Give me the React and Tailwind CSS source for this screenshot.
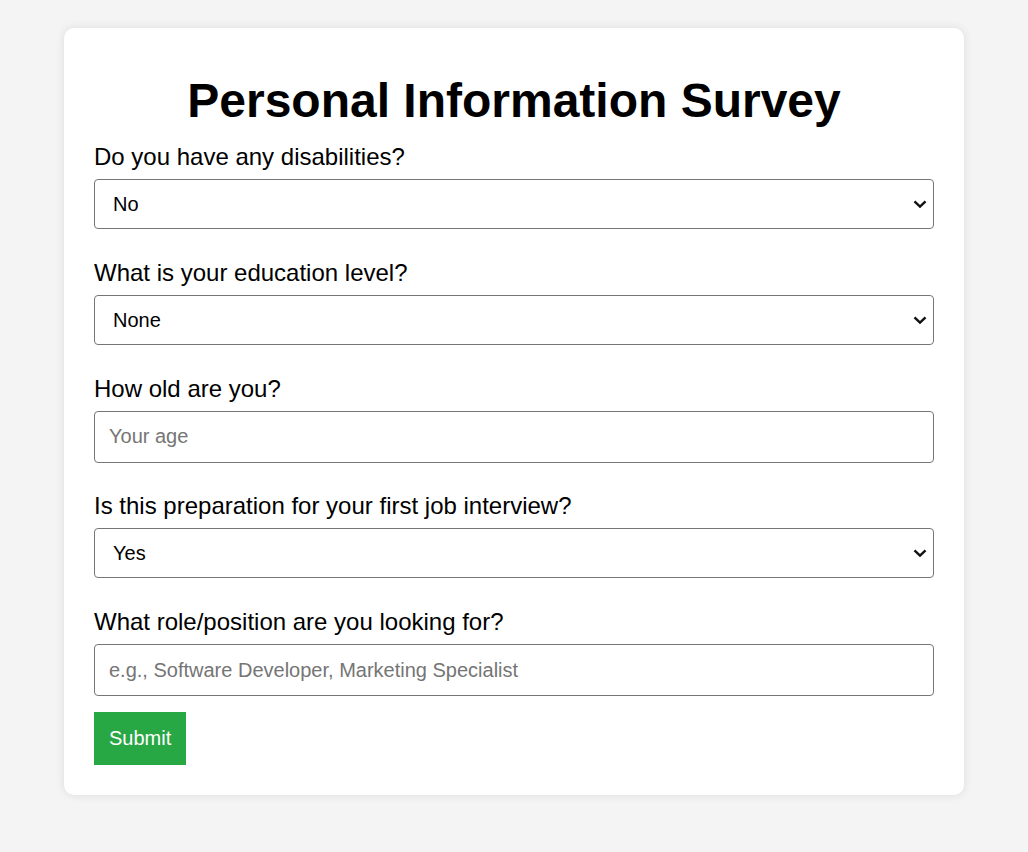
import React, { useState } from 'react';

const fieldClass =
  'w-full border border-[#767676] rounded-[4px] bg-white px-[14px] text-[20px] text-black outline-none';

const Field = ({ label, children, last }) => (
  <div className={last ? 'mb-[16px]' : 'mb-[29.75px]'}>
    <label className="block text-[24px] leading-[28px] mb-[8px]">{label}</label>
    {children}
  </div>
);

const Select = ({ value, onChange, options }) => (
  <div className="relative">
    <select
      className={`${fieldClass} h-[50px] appearance-none pl-[18px] pr-[36px]`}
      value={value}
      onChange={onChange}
    >
      {options.map((o) => (
        <option key={o}>{o}</option>
      ))}
    </select>
    <svg
      className="pointer-events-none absolute right-[7px] top-1/2 -translate-y-1/2"
      width="14"
      height="9"
      viewBox="0 0 14 9"
      fill="none"
    >
      <path d="M1.5 1.8 L7 7 L12.5 1.8" stroke="#111" strokeWidth="2.4" />
    </svg>
  </div>
);

export default function App() {
  const [form, setForm] = useState({
    disability: 'No',
    education: 'None',
    age: '',
    firstJob: 'Yes',
    role: '',
  });

  const set = (key) => (e) => setForm({ ...form, [key]: e.target.value });

  return (
    <div
      className="min-h-[852px] bg-[#f4f4f4] pt-[28px] text-black"
      style={{ fontFamily: '"Liberation Sans", Arial, sans-serif' }}
    >
      <div className="mx-auto w-[900px] bg-white rounded-[10px] shadow-[0_0_10px_rgba(0,0,0,0.1)] px-[30px] pt-[45px] pb-[30px]">
        <h1 className="text-center text-[48px] font-bold leading-[55px] mb-[15px]">
          Personal Information Survey
        </h1>
        <form onSubmit={(e) => e.preventDefault()}>
          <Field label="Do you have any disabilities?">
            <Select value={form.disability} onChange={set('disability')} options={['No', 'Yes']} />
          </Field>
          <Field label="What is your education level?">
            <Select
              value={form.education}
              onChange={set('education')}
              options={['None', 'High School', "Bachelor's Degree", "Master's Degree", 'PhD']}
            />
          </Field>
          <Field label="How old are you?">
            <input
              type="number"
              placeholder="Your age"
              className={`${fieldClass} h-[52px] placeholder:text-[#757575]`}
              value={form.age}
              onChange={set('age')}
            />
          </Field>
          <Field label="Is this preparation for your first job interview?">
            <Select value={form.firstJob} onChange={set('firstJob')} options={['Yes', 'No']} />
          </Field>
          <Field label="What role/position are you looking for?" last>
            <input
              type="text"
              placeholder="e.g., Software Developer, Marketing Specialist"
              className={`${fieldClass} h-[52px] placeholder:text-[#757575]`}
              value={form.role}
              onChange={set('role')}
            />
          </Field>
          <button
            type="submit"
            className="bg-[#28a745] text-white text-[20px] leading-[23px] px-[15px] py-[15px]"
          >
            Submit
          </button>
        </form>
      </div>
    </div>
  );
}
